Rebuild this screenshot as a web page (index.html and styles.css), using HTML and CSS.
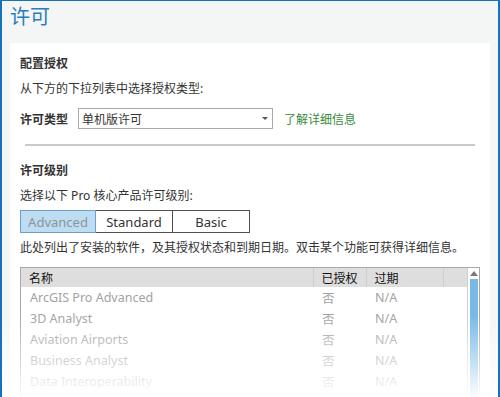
FILE: index.html
```html
<!doctype html>
<html lang="zh-CN">
  <head>
    <meta charset="UTF-8" />
    <meta name="viewport" content="width=device-width, initial-scale=1.0" />
    <title>许可</title>
    <link rel="stylesheet" href="styles.css">
  </head>
  <body>
    <div class="window">
      <h1 class="title">许可</h1>

      <div class="panel">
        <h2 class="heading">配置授权</h2>
        <p class="hint">从下方的下拉列表中选择授权类型:</p>

        <div class="type-row">
          <span class="label">许可类型</span>
          <div class="select">
            <span>单机版许可</span>
            <span class="caret"></span>
          </div>
          <a class="link" href="#">了解详细信息</a>
        </div>

        <div class="divider"></div>

        <h2 class="heading heading-level">许可级别</h2>
        <p class="hint">选择以下 Pro 核心产品许可级别:</p>

        <div class="levels">
          <button class="level active">Advanced</button>
          <button class="level">Standard</button>
          <button class="level">Basic</button>
        </div>

        <p class="hint hint-list">此处列出了安装的软件，及其授权状态和到期日期。双击某个功能可获得详细信息。</p>

        <div class="grid">
          <table class="features">
            <thead>
              <tr>
                <th class="col-name">名称</th>
                <th class="col-auth">已授权</th>
                <th class="col-exp">过期</th>
                <th class="col-rest"></th>
              </tr>
            </thead>
            <tbody>
              <tr><td>ArcGIS Pro Advanced</td><td>否</td><td>N/A</td><td></td></tr>
              <tr><td>3D Analyst</td><td>否</td><td>N/A</td><td></td></tr>
              <tr><td>Aviation Airports</td><td>否</td><td>N/A</td><td></td></tr>
              <tr><td>Business Analyst</td><td>否</td><td>N/A</td><td></td></tr>
              <tr><td>Data Interoperability</td><td>否</td><td>N/A</td><td></td></tr>
            </tbody>
          </table>
          <div class="scrollbar">
            <span class="arrow-up"></span>
            <span class="thumb"></span>
          </div>
        </div>
      </div>

      <div class="fade"></div>
    </div>
  </body>
</html>
```

FILE: styles.css
```css
:root {
  --frame: #1672bd;
  --title: #2a7cc2;
  --window-bg: #f4f6f6;
  --text: #333333;
  --muted: #a2a2a2;
  --line: #c9c9c9;
  --link: #3a8a3a;
}

* {
  margin: 0;
  padding: 0;
  box-sizing: border-box;
}

body {
  font-family: "Noto Sans", "Noto Sans CJK SC", sans-serif;
  font-size: 12px;
  color: var(--text);
  background: #ffffff;
}

.window {
  position: relative;
  width: 500px;
  height: 397px;
  overflow: hidden;
  background: var(--window-bg);
  border-top: 1px solid var(--frame);
  border-left: 2px solid var(--frame);
  border-right: 2px solid var(--frame);
}

.title {
  font-family: "Noto Sans CJK SC", sans-serif;
  font-size: 20px;
  font-weight: 400;
  line-height: 28px;
  color: var(--title);
  padding: 1px 0 0 8px;
  margin-bottom: 13px;
}

.panel {
  background: #ffffff;
  margin: 0 8px;
  padding: 10px 10px 0 10px;
  height: 360px;
}

.heading {
  font-family: "Noto Sans CJK SC", sans-serif;
  font-size: 12px;
  font-weight: 700;
  line-height: 20px;
}

.hint {
  line-height: 20px;
  margin-top: 6px;
}

.type-row {
  display: flex;
  align-items: center;
  margin-top: 9px;
  height: 21px;
}

.label {
  font-weight: 700;
  width: 58px;
}

.select {
  display: flex;
  align-items: center;
  justify-content: space-between;
  width: 195px;
  height: 21px;
  border: 1px solid #a9a9a9;
  padding: 0 4px 0 3px;
}

.caret {
  width: 0;
  height: 0;
  border-left: 3px solid transparent;
  border-right: 3px solid transparent;
  border-top: 3px solid #555555;
}

.link {
  margin-left: 11px;
  color: var(--link);
  text-decoration: none;
}

.divider {
  height: 2px;
  background: var(--line);
  margin: 15px 5px 0 5px;
}

.heading-level {
  margin-top: 14px;
}

.levels {
  display: flex;
  margin-top: 4px;
  height: 23px;
}

.level {
  font-family: "Noto Sans", sans-serif;
  font-size: 13px;
  color: var(--text);
  background: #ffffff;
  border: 1px solid #505050;
  border-left: none;
  width: 77px;
  height: 23px;
}

.level:first-child {
  border-left: 1px solid #6f9fc9;
  width: 76px;
}

.level.active {
  background: #bedcf2;
  border-color: #6f9fc9;
  color: #8a949c;
}

.hint-list {
  margin-top: 5px;
}

.grid {
  display: flex;
  margin-top: 9px;
  border: 1px solid #a8a8a8;
  width: 460px;
  height: 140px;
}

.features {
  flex: 1;
  border-collapse: collapse;
  table-layout: fixed;
  align-self: flex-start;
  font-size: 12.5px;
}

.features th {
  background: #dedede;
  font-family: "Noto Sans CJK SC", sans-serif;
  font-size: 12px;
  font-weight: 400;
  color: #111111;
  text-align: left;
  height: 19px;
  padding: 0 0 0 8px;
  border-left: 1px solid #cdcdcd;
}

.features th:first-child {
  border-left: none;
}

.features td {
  color: var(--muted);
  height: 21px;
  padding: 0 0 0 9px;
}

.col-name {
  width: 292px;
}

.col-auth {
  width: 53px;
}

.col-exp {
  width: 77px;
}

.scrollbar {
  display: flex;
  flex-direction: column;
  align-items: center;
  width: 12px;
  background: #ffffff;
  border-left: 1px solid #d0d0d0;
}

.arrow-up {
  margin-top: 3px;
  width: 0;
  height: 0;
  border-left: 4px solid transparent;
  border-right: 4px solid transparent;
  border-bottom: 5px solid #7a7a7a;
}

.thumb {
  margin-top: 3px;
  width: 8px;
  flex: 1;
  background: #78b9e6;
}

.fade {
  position: absolute;
  left: -2px;
  right: -2px;
  bottom: 0;
  height: 82px;
  background: linear-gradient(
    to bottom,
    rgba(255, 255, 255, 0) 0%,
    rgba(255, 255, 255, 0.97) 100%
  );
}
```
